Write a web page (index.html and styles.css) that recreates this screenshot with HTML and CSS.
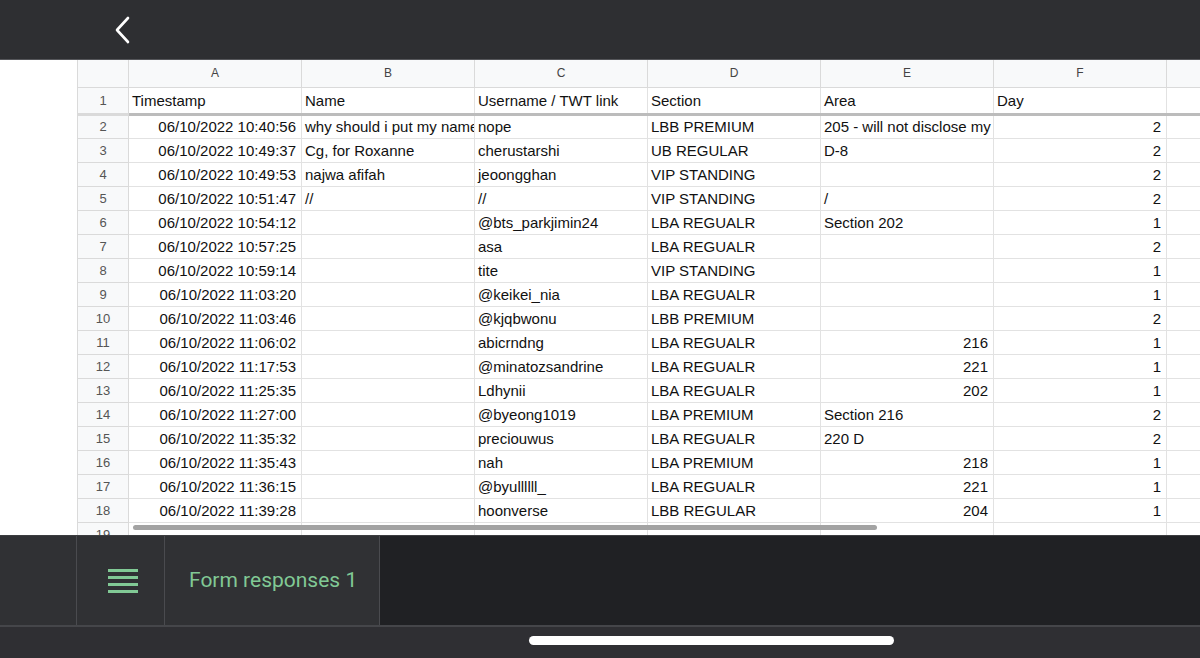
FILE: index.html
```html
<!DOCTYPE html>
<html lang="en">
<head>
  <meta charset="UTF-8" />
  <title>Form responses 1</title>
  <link rel="stylesheet" href="styles.css">
</head>
<body>
  <header class="top-bar">
    <button class="back-btn" aria-label="Back">
      <svg width="20" height="28" viewBox="0 0 20 28"><path d="M15 2 L4 14 L15 26" fill="none" stroke="#fff" stroke-width="2.6" stroke-linecap="round" stroke-linejoin="round"/></svg>
    </button>
  </header>

  <main class="sheet">
    <div class="grid-wrap">
      <table class="grid">
        <colgroup>
          <col class="c-rh"><col class="c-w"><col class="c-w"><col class="c-w"><col class="c-w"><col class="c-w"><col class="c-w"><col>
        </colgroup>
        <thead>
          <tr class="col-head">
            <th></th><th>A</th><th>B</th><th>C</th><th>D</th><th>E</th><th>F</th><th></th>
          </tr>
        </thead>
        <tbody>
          <tr class="frozen">
            <th>1</th><td>Timestamp</td><td>Name</td><td>Username / TWT link</td><td>Section</td><td>Area</td><td>Day</td><td></td>
          </tr>
          <tr><th>2</th><td class="num">06/10/2022 10:40:56</td><td>why should i put my name</td><td>nope</td><td>LBB PREMIUM</td><td>205 - will not disclose my</td><td class="num">2</td><td></td></tr>
          <tr><th>3</th><td class="num">06/10/2022 10:49:37</td><td>Cg, for Roxanne</td><td>cherustarshi</td><td>UB REGULAR</td><td>D-8</td><td class="num">2</td><td></td></tr>
          <tr><th>4</th><td class="num">06/10/2022 10:49:53</td><td>najwa afifah</td><td>jeoongghan</td><td>VIP STANDING</td><td></td><td class="num">2</td><td></td></tr>
          <tr><th>5</th><td class="num">06/10/2022 10:51:47</td><td>//</td><td>//</td><td>VIP STANDING</td><td>/</td><td class="num">2</td><td></td></tr>
          <tr><th>6</th><td class="num">06/10/2022 10:54:12</td><td></td><td>@bts_parkjimin24</td><td>LBA REGUALR</td><td>Section 202</td><td class="num">1</td><td></td></tr>
          <tr><th>7</th><td class="num">06/10/2022 10:57:25</td><td></td><td>asa</td><td>LBA REGUALR</td><td></td><td class="num">2</td><td></td></tr>
          <tr><th>8</th><td class="num">06/10/2022 10:59:14</td><td></td><td>tite</td><td>VIP STANDING</td><td></td><td class="num">1</td><td></td></tr>
          <tr><th>9</th><td class="num">06/10/2022 11:03:20</td><td></td><td>@keikei_nia</td><td>LBA REGUALR</td><td></td><td class="num">1</td><td></td></tr>
          <tr><th>10</th><td class="num">06/10/2022 11:03:46</td><td></td><td>@kjqbwonu</td><td>LBB PREMIUM</td><td></td><td class="num">2</td><td></td></tr>
          <tr><th>11</th><td class="num">06/10/2022 11:06:02</td><td></td><td>abicrndng</td><td>LBA REGUALR</td><td class="num">216</td><td class="num">1</td><td></td></tr>
          <tr><th>12</th><td class="num">06/10/2022 11:17:53</td><td></td><td>@minatozsandrine</td><td>LBA REGUALR</td><td class="num">221</td><td class="num">1</td><td></td></tr>
          <tr><th>13</th><td class="num">06/10/2022 11:25:35</td><td></td><td>Ldhynii</td><td>LBA REGUALR</td><td class="num">202</td><td class="num">1</td><td></td></tr>
          <tr><th>14</th><td class="num">06/10/2022 11:27:00</td><td></td><td>@byeong1019</td><td>LBA PREMIUM</td><td>Section 216</td><td class="num">2</td><td></td></tr>
          <tr><th>15</th><td class="num">06/10/2022 11:35:32</td><td></td><td>preciouwus</td><td>LBA REGUALR</td><td>220 D</td><td class="num">2</td><td></td></tr>
          <tr><th>16</th><td class="num">06/10/2022 11:35:43</td><td></td><td>nah</td><td>LBA PREMIUM</td><td class="num">218</td><td class="num">1</td><td></td></tr>
          <tr><th>17</th><td class="num">06/10/2022 11:36:15</td><td></td><td>@byullllll_</td><td>LBA REGUALR</td><td class="num">221</td><td class="num">1</td><td></td></tr>
          <tr><th>18</th><td class="num">06/10/2022 11:39:28</td><td></td><td>hoonverse</td><td>LBB REGULAR</td><td class="num">204</td><td class="num">1</td><td></td></tr>
          <tr><th>19</th><td></td><td></td><td></td><td></td><td></td><td></td><td></td></tr>
        </tbody>
      </table>
      <div class="h-scroll"></div>
    </div>
  </main>

  <footer class="tab-bar">
    <div class="tab-spacer"></div>
    <div class="tab-menu">
      <svg width="30" height="24" viewBox="0 0 30 24"><g fill="#81c995"><rect x="0" y="0" width="30" height="3"/><rect x="0" y="7" width="30" height="3"/><rect x="0" y="14" width="30" height="3"/><rect x="0" y="21" width="30" height="3"/></g></svg>
    </div>
    <div class="tab-item">Form responses 1</div>
    <div class="tab-rest"></div>
  </footer>

  <div class="home-area"><span class="home-pill"></span></div>
</body>
</html>
```

FILE: styles.css
```css
* { box-sizing: border-box; }
html, body { margin: 0; height: 100%; }
body {
  width: 1200px;
  height: 658px;
  overflow: hidden;
  display: flex;
  flex-direction: column;
  background: #fff;
  font-family: "Liberation Sans", Arial, sans-serif;
}

.top-bar {
  height: 60px;
  flex: none;
  background: #2e2f32;
  display: flex;
  align-items: center;
  padding-left: 112px;
  border-bottom: 1px solid #55565a;
}
.back-btn {
  background: none;
  border: 0;
  padding: 0;
  width: 22px;
  height: 28px;
}

.sheet {
  flex: 1;
  overflow: hidden;
  padding-left: 77px;
}
.grid-wrap { position: relative; height: 100%; overflow: hidden; }

.grid {
  border-collapse: collapse;
  table-layout: fixed;
  width: 1160px;
  font-size: 15px;
  color: #111;
}
.c-rh { width: 51px; }
.c-w { width: 173px; }
.grid tbody tr { height: 24px; }
.grid td, .grid th {
  padding: 0 3px;
  border: 1px solid #e2e2e2;
  white-space: nowrap;
  overflow: hidden;
  line-height: 21px;
}
.grid td.num { text-align: right; padding-right: 5px; }
.grid tbody th {
  background: #f8f9fa;
  font-weight: normal;
  font-size: 13px;
  color: #555;
  text-align: center;
  border-color: #dadada;
}
.grid thead tr { height: 27px; }
.col-head th {
  background: #f8f9fa;
  font-weight: normal;
  font-size: 12px;
  color: #444;
  text-align: center;
  border-color: #dadada;
  border-top: 0;
}
.grid tbody tr.frozen { height: 27px; }
.frozen th, .frozen td { border-bottom: 3px solid #bcbcbc; }

.h-scroll {
  position: absolute;
  left: 56px;
  top: 465px;
  width: 744px;
  height: 5px;
  border-radius: 3px;
  background: #a3a3a3;
}

.tab-bar {
  height: 90px;
  flex: none;
  display: flex;
  background: #202124;
  border-top: 1px solid #3c3d40;
}
.tab-spacer { width: 77px; background: #303134; border-right: 1px solid #4a4b4f; }
.tab-menu {
  width: 88px;
  background: #303134;
  border-right: 1px solid #4a4b4f;
  display: flex;
  align-items: center;
  justify-content: center;
  padding-left: 4px;
}
.tab-item {
  width: 215px;
  background: #303134;
  border-right: 1px solid #4a4b4f;
  display: flex;
  align-items: center;
  padding-left: 24px;
  padding-bottom: 2px;
  font-family: Roboto, "Open Sans", sans-serif;
  font-size: 21px;
  color: #81c995;
}
.tab-rest { flex: 1; }

.home-area {
  height: 33px;
  flex: none;
  background: #2f2f33;
  border-top: 2px solid #45464a;
  padding-top: 9px;
  padding-left: 529px;
}
.home-pill {
  display: block;
  width: 365px;
  height: 9px;
  border-radius: 5px;
  background: #fff;
}
```
